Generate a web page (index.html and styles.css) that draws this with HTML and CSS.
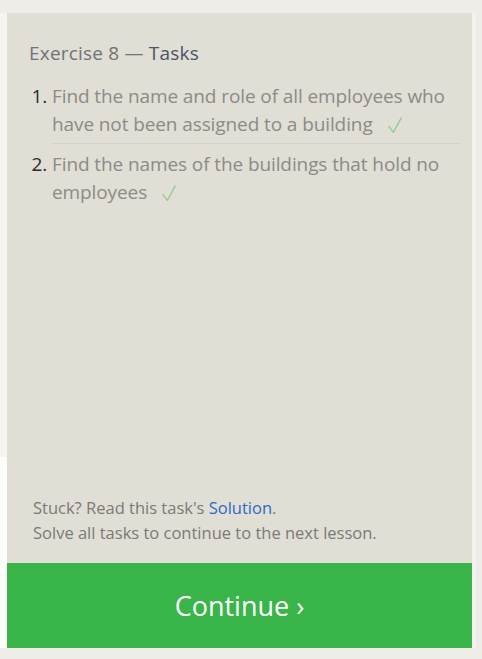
FILE: index.html
```html
<!DOCTYPE html>
<html>
<head>
<meta charset="utf-8">
<link rel="stylesheet" href="styles.css">
</head>
<body>
<div class="page">
  <div class="side">
    <div class="side-top"></div>
    <div class="side-bottom"></div>
  </div>
  <div class="panel">
    <div class="panel-body">
      <h2 class="title"><span class="ex">Exercise 8 —</span> Tasks</h2>
      <ol class="tasks">
        <li class="task"><span class="txt">Find the name and role of all employees who have not been assigned to a building</span><svg class="check" width="14" height="16" viewBox="0 0 14 16"><path d="M0.6 9.2 L5.4 15.3 L13.4 0.6" fill="none" stroke="#8ecc8e" stroke-width="1.3"/></svg></li>
        <li class="task"><span class="txt">Find the names of the buildings that hold no employees</span><svg class="check" width="14" height="16" viewBox="0 0 14 16"><path d="M0.6 9.2 L5.4 15.3 L13.4 0.6" fill="none" stroke="#8ecc8e" stroke-width="1.3"/></svg></li>
      </ol>
      <div class="spacer"></div>
      <p class="hint">Stuck? Read this task's <a class="link" href="#">Solution</a>.<br>Solve all tasks to continue to the next lesson.</p>
    </div>
    <button class="continue">Continue ›</button>
  </div>
  <div class="rside"></div>
</div>
</body>
</html>
```

FILE: styles.css
```css
html, body {
  margin: 0;
  padding: 0;
  background: #efede7;
  font-family: "Open Sans", "Noto Sans", sans-serif;
}
.page {
  display: flex;
  align-items: flex-start;
  padding-top: 13px;
  height: 646px;
}
.side {
  width: 7px;
  display: flex;
  flex-direction: column;
}
.side-top {
  height: 444px;
  background: #f5f4f0;
}
.side-bottom {
  height: 191px;
  background: #fdfdfc;
}
.panel {
  width: 465px;
  display: flex;
  flex-direction: column;
  height: 635px;
}
.panel-body {
  height: 550px;
  background: #e0ded5;
  display: flex;
  flex-direction: column;
  box-sizing: border-box;
  padding: 27px 11px 0 22px;
}
.title {
  margin: 0;
  font-weight: normal;
  font-size: 19px;
  line-height: 26px;
  color: #4d5466;
  letter-spacing: 0.2px;
}
.title .ex {
  color: #707378;
}
.tasks {
  margin: 16px 0 0 0;
  padding: 0 0 0 23px;
}
.task {
  font-size: 19px;
  line-height: 28px;
  color: #8c8b87;
  padding: 0 0 5px 0;
  letter-spacing: -0.1px;
}
.task::marker {
  color: #2a2a2a;
}
.task + .task {
  padding-top: 6px;
}
.task:first-child {
  border-bottom: 1px solid #d3d1c8;
}
.check {
  margin-left: 15px;
  vertical-align: -2px;
}
.spacer {
  flex: 1;
}
.hint {
  margin: 0 0 18px 4px;
  font-size: 16.5px;
  line-height: 25px;
  color: #7b7a77;
  letter-spacing: 0;
}
.link {
  color: #2f6bc2;
  text-decoration: none;
}
.continue {
  height: 85px;
  border: none;
  background: #39b54a;
  color: #ffffff;
  font-family: "Open Sans", "Noto Sans", sans-serif;
  font-size: 27px;
  padding: 0;
  margin: 0;
  cursor: pointer;
}
.rside {
  width: 4px;
  height: 635px;
  background: #f3f2ee;
}
```
